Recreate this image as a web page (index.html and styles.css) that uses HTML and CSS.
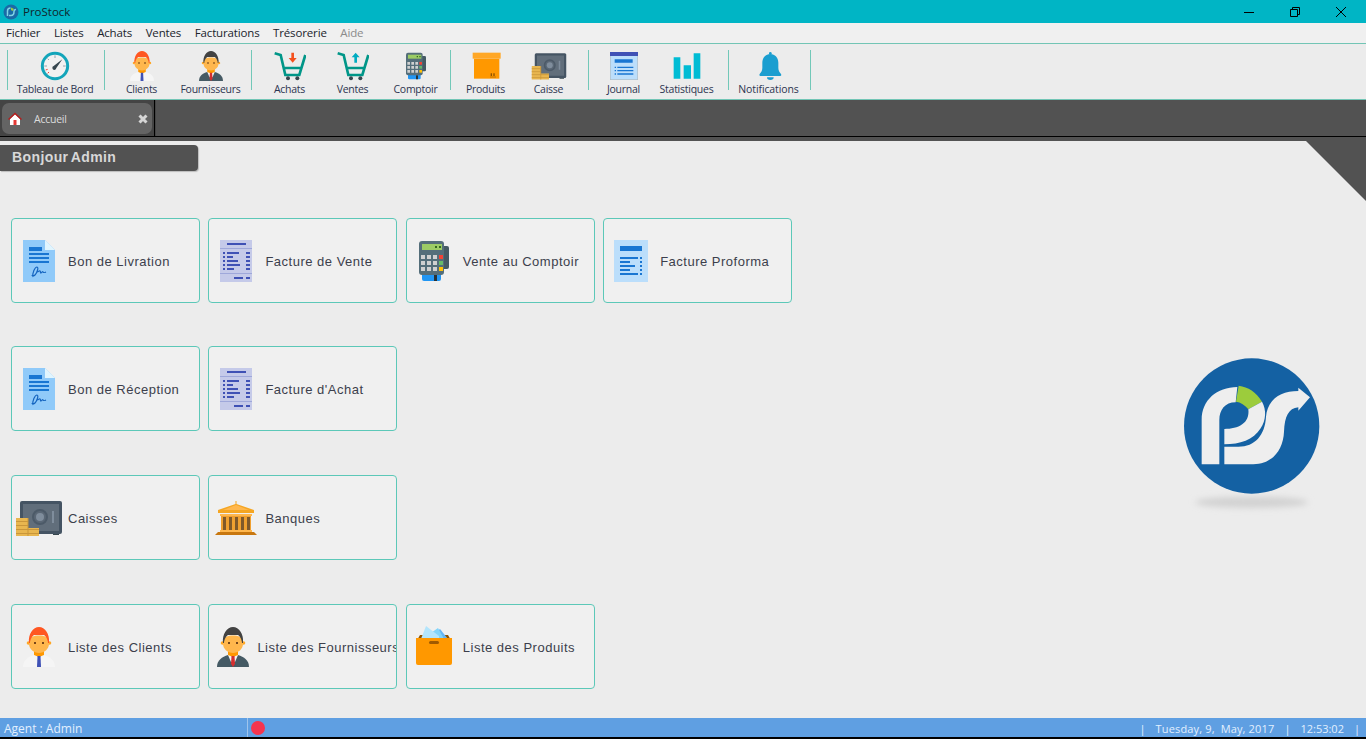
FILE: index.html
```html
<!DOCTYPE html>
<html lang="fr">
<head>
    <meta charset="UTF-8">
    <meta name="viewport" content="width=device-width, initial-scale=1.0">
    <title>ProStock</title>
    <link rel="stylesheet" href="styles.css">
</head>
<body>
    <!-- icon sheet, everything below is drawn on a 48x48 box -->
    <svg class="icon-sheet" xmlns="http://www.w3.org/2000/svg">
        <symbol id="i-doc" viewBox="0 0 48 48">
            <path fill="#90caf9" d="M8 3h22l10 10v32H8z"/>
            <path fill="#e1f5fe" d="M30 3l10 10H30z"/>
            <path fill="#1976d2" d="M14 10h13v4H14zM14 16h20v2H14zM14 20h20v2H14zM14 24h20v2H14z"/>
            <path fill="none" stroke="#1565c0" stroke-width="1.2" d="M18 40c-1-4 2-10 4-10 2 0 0 6-2 8-1 1-3 1-3 0M22 35c2 0 2-2 3-1s0 2 1 2 1-2 2-1 1 1 3 0"/>
        </symbol>
        <symbol id="i-receipt" viewBox="0 0 48 48">
            <path fill="#c5cae9" d="M8 3h32v42H8z"/>
            <path fill="#9fa8da" d="M8 11h32v1H8zM8 36h32v1H8z"/>
            <path fill="#3f51b5" d="M15 6h19v2H15zM11 15h2v2h-2zM15 15h12v2H15zM34 15h4v2h-4zM11 19h2v2h-2zM15 19h6v2h-6zM34 19h4v2h-4zM11 23h2v2h-2zM15 23h11v2H15zM34 23h4v2h-4zM11 27h2v2h-2zM15 27h13v2H15zM34 27h4v2h-4zM11 31h2v2h-2zM15 31h7v2h-7zM34 31h4v2h-4zM22 40h9v2h-9zM34 40h4v2h-4z"/>
        </symbol>
        <symbol id="i-terminal" viewBox="0 0 48 48">
            <path fill="#455a64" d="M32 9h5a2 2 0 0 1 2 2v19a2 2 0 0 1-2 2h-5z"/>
            <path fill="#2196f3" d="M12 36h19v6a2 2 0 0 1-2 2H14a2 2 0 0 1-2-2z"/>
            <path fill="#263238" d="M24 38h3v6h-3z"/>
            <rect fill="#546e7a" x="9" y="4" width="25" height="34" rx="3"/>
            <path fill="#9ccc65" d="M12 7h20v6H12z"/>
            <path fill="#33691e" d="M25 9h2v2h-2zM29 9h2v2h-2z"/>
            <path fill="#cfd0d0" d="M11 18h4v4h-4zM17 18h4v4h-4zM23 18h4v4h-4zM11 24h4v4h-4zM17 24h4v4h-4zM23 24h4v4h-4zM11 30h4v4h-4zM17 30h4v4h-4zM23 30h4v4h-4z"/>
            <path fill="#f44336" d="M29 18h4v4h-4z"/>
            <path fill="#66bb6a" d="M29 24h4v4h-4z"/>
            <path fill="#ffc107" d="M29 30h4v4h-4z"/>
        </symbol>
        <symbol id="i-proforma" viewBox="0 0 48 48">
            <path fill="#bbdefb" d="M7 3h34v42H7z"/>
            <path fill="#1976d2" d="M13 9h22v5H13zM13 20h18v2H13zM33 20h2v2h-2zM13 24h10v2H13zM33 24h2v2h-2zM13 28h15v2H13zM33 28h2v2h-2zM13 32h10v2H13zM33 32h2v2h-2zM13 36h18v2H13zM33 36h2v2h-2z"/>
        </symbol>
        <symbol id="i-safe" viewBox="0 0 48 48">
            <path fill="#37474f" d="M38 39h6v2h-6z"/>
            <rect fill="#455463" x="5" y="7" width="42" height="33" rx="2"/>
            <path fill="#616e7b" d="M8 10h36v27H8z"/>
            <circle fill="#5a6775" stroke="#4c5a68" stroke-width="2" cx="25" cy="23" r="7"/>
            <circle fill="#7f8d9c" cx="25" cy="23" r="4"/>
            <path fill="#7f8d9c" d="M37 17h2v12h-2z"/>
            <path fill="#e8b64f" d="M1 24h12v18H1zM13 34h11v8H13z"/>
            <path stroke="#c9963a" fill="none" d="M1 27.500h12M1 31.500h12M1 35.500h23M1 39.500h23M13 24v18"/>
        </symbol>
        <symbol id="i-bank" viewBox="0 0 48 48">
            <path fill="#f5a623" d="M23.500 7h1v3l17.500 6v3H6v-3l17.500-6z"/>
            <path fill="#ffb74d" d="M24 11l13 5H11zM8 20h32v2H8z"/>
            <path fill="#f0a030" d="M9 22h30v14H9z"/>
            <path fill="#80592a" d="M11 23h3v13h-3zM17 23h3v13h-3zM23 23h3v13h-3zM29 23h3v13h-3zM35 23h3v13h-3z"/>
            <path fill="#ffb74d" d="M8 36h32v2H8z"/>
            <path fill="#c8770f" d="M6 38h36l3 3H3z"/>
        </symbol>
        <symbol id="i-client" viewBox="0 0 48 48">
            <path fill="#f5f5f5" d="M8 44c0-7 5-10 11-12h10c6 2 11 5 11 12z"/>
            <path fill="#ff9800" d="M19 27h10v5l-5 2-5-2z"/>
            <path fill="#3f51b5" d="M22.500 33h3l.5 11h-4z"/>
            <circle fill="#ffa726" cx="13.500" cy="20" r="1.800"/>
            <circle fill="#ffa726" cx="34.500" cy="20" r="1.800"/>
            <path fill="#ffb74d" d="M14 17c0-6 20-6 20 0v4c0 5-5 9-10 9s-10-4-10-9z"/>
            <path fill="#ff5722" d="M14 20c-1-9 4-16 10-16s11 7 10 16l-1 0c0-3-2-7-4-8h-10c-2 1-4 5-4 8z"/>
            <path fill="#784719" d="M19 19h2v2h-2zM27 19h2v2h-2z"/>
        </symbol>
        <symbol id="i-supplier" viewBox="0 0 48 48">
            <path fill="#455a64" d="M8 44c0-7 5-10 11-12h10c6 2 11 5 11 12z"/>
            <path fill="#f5f5f5" d="M19 32h10l-3 7h-4z"/>
            <path fill="#ff9800" d="M19 27h10v5l-5 2-5-2z"/>
            <path fill="#d32f2f" d="M22.500 33h3l.5 8-2 3-2-3z"/>
            <circle fill="#ffa726" cx="13.500" cy="20" r="1.800"/>
            <circle fill="#ffa726" cx="34.500" cy="20" r="1.800"/>
            <path fill="#ffb74d" d="M14 17c0-6 20-6 20 0v4c0 5-5 9-10 9s-10-4-10-9z"/>
            <path fill="#424242" d="M14 20c-1-9 4-16 10-16s11 7 10 16l-1 0c0-3-2-7-4-8h-10c-2 1-4 5-4 8z"/>
            <path fill="#784719" d="M19 19h2v2h-2zM27 19h2v2h-2z"/>
        </symbol>
        <symbol id="i-openbox" viewBox="0 0 48 48">
            <path fill="#8d5200" d="M6 19l4-7h28l4 7z"/>
            <path fill="#64b5f6" d="M24 11l6-5 8 10H24z"/>
            <path fill="#81d4fa" d="M18 12l10-7 6 11H18z"/>
            <path fill="#b3e5fc" d="M11 16l5-13 13 10v3z"/>
            <path fill="#ff9800" d="M6 15h36v25a2 2 0 0 1-2 2H8a2 2 0 0 1-2-2z"/>
            <rect fill="#a05a00" x="19" y="18" width="10" height="3" rx="1.500"/>
        </symbol>
        <symbol id="i-gauge" viewBox="0 0 48 48">
            <circle fill="#f1f1f1" stroke="#13a5ba" stroke-width="4.500" cx="24" cy="24" r="19"/>
            <path fill="#37474f" d="M35 14L26 27a3 3 0 1 1-4-3z"/>
            <path fill="none" stroke="#90a4ae" stroke-width="1.500" d="M24 8v4M13 13l2 2M8 24h4M40 24h-4"/>
            <path fill="none" stroke="#f44336" stroke-width="1.500" d="M10 30l3-1M13 35l2-2"/>
        </symbol>
        <symbol id="i-cart-in" viewBox="0 0 48 48">
            <path fill="none" stroke="#009688" stroke-width="4" d="M1 5l9 2.500 7 30h21l9-30M13 27h29"/>
            <circle fill="#37474f" cx="21" cy="42.500" r="3"/>
            <circle fill="#37474f" cx="35" cy="42.500" r="3"/>
            <path fill="#f4511e" d="M26 4h4v8h4l-6 7-6-7h4z"/>
        </symbol>
        <symbol id="i-cart-out" viewBox="0 0 48 48">
            <path fill="none" stroke="#009688" stroke-width="4" d="M1 5l9 2.500 7 30h21l9-30M13 27h29"/>
            <circle fill="#37474f" cx="21" cy="42.500" r="3"/>
            <circle fill="#37474f" cx="35" cy="42.500" r="3"/>
            <path fill="#00acc1" d="M26 19h4v-8h4l-6-7-6 7h4z"/>
        </symbol>
        <symbol id="i-box" viewBox="0 0 48 48">
            <path fill="#ff9800" d="M6 13h38v30H6z"/>
            <path fill="#ffa726" d="M4 4h42v9H4z"/>
            <path fill="#8d5200" d="M31 35h2v4h-2zM35 35h2v4h-2zM30 40h9v1h-9z"/>
        </symbol>
        <symbol id="i-journal" viewBox="0 0 48 48">
            <path fill="#b0bec5" d="M3 3h42v42H3z"/>
            <path fill="#bbdefb" d="M4 9h40v35H4z"/>
            <path fill="#3f51b5" d="M3 3h42v6H3z"/>
            <path fill="#1976d2" d="M10 14h27v5H10zM10 25h2v2h-2zM14 25h24v2H14zM10 30h2v2h-2zM14 30h24v2H14zM10 35h2v2h-2zM14 35h24v2H14z"/>
        </symbol>
        <symbol id="i-bars" viewBox="0 0 48 48">
            <path fill="#00bcd4" d="M4 11h10v32H4zM19 23h11v20H19zM34 5h10v38H34z"/>
        </symbol>
        <symbol id="i-bell" viewBox="0 0 48 48">
            <circle fill="#1a9ed0" cx="26" cy="5" r="2"/>
            <path fill="#1a9ed0" d="M26 6c-7 0-12 6-12 13v8c0 4-2 7-4 9-1 2 0 3 2 3h28c2 0 3-1 2-3-2-2-4-5-4-9v-8c0-7-5-13-12-13z"/>
            <path fill="#1a9ed0" d="M21 41a5 4 0 0 0 10 0z"/>
        </symbol>
        <symbol id="i-logo" viewBox="0 0 495 525">
            <circle fill="#1461a3" cx="245" cy="243" r="203"/>
            <path fill="#eeeeee" d="M95 358V225C95 165 140 127 202 126L197 172C165 172 148 195 148 225V358Z"/>
            <path fill="#9ccc3c" d="M206 122C235 126 258 140 276 170L235 193C225 180 212 172 198 170Z"/>
            <path fill="#eeeeee" d="M235 193L276 170C290 195 288 225 272 250C250 285 210 298 163 298V252C205 252 240 235 235 193Z"/>
            <path fill="#eeeeee" d="M163 305H205C255 305 285 270 288 215C292 165 330 138 385 138V128L420 157L385 197V187C355 190 344 215 342 260C340 310 310 358 250 358H163Z"/>
        </symbol>
    </svg>

    <div class="window">
        <header class="titlebar">
            <div class="titlebar-name">
                <svg class="app-icon" viewBox="0 0 16 16">
                    <circle fill="#1a6aa6" cx="8" cy="8" r="7.500"/>
                    <path fill="none" stroke="#7fd4e6" stroke-width="1.500" d="M4.500 12V7c0-2 1-3 3-3"/>
                    <path fill="#9ccc3c" d="M8 3.500l3 1.500-1.500 2L8 6z"/>
                    <path fill="none" stroke="#7fd4e6" stroke-width="1.500" d="M6 11.500h2c2 0 3-2 3-4 0-1 1-2 2-2"/>
                </svg>
                <span>ProStock</span>
            </div>
            <div class="win-controls">
                <svg class="win-btn" viewBox="0 0 12 12"><path d="M1 6.500h10"/></svg>
                <svg class="win-btn" viewBox="0 0 12 12"><path d="M1.500 3.500h7v7h-7zM3.500 3.500v-2h7v7h-2"/></svg>
                <svg class="win-btn" viewBox="0 0 12 12"><path d="M1 1l10 10M11 1L1 11"/></svg>
            </div>
        </header>

        <nav class="menubar">
            <span>Fichier</span>
            <span>Listes</span>
            <span>Achats</span>
            <span>Ventes</span>
            <span>Facturations</span>
            <span>Trésorerie</span>
            <span class="disabled">Aide</span>
        </nav>

        <div class="toolbar">
            <div class="tool-group group-dash">
                <div class="tool tool-wide"><svg class="tool-icon"><use href="#i-gauge"/></svg><span>Tableau de Bord</span></div>
            </div>
            <div class="tool-group group-people">
                <div class="tool tool-people"><svg class="tool-icon icon-big"><use href="#i-client"/></svg><span>Clients</span></div>
                <div class="tool tool-people"><svg class="tool-icon icon-big"><use href="#i-supplier"/></svg><span>Fournisseurs</span></div>
            </div>
            <div class="tool-group group-sales">
                <div class="tool"><svg class="tool-icon"><use href="#i-cart-in"/></svg><span>Achats</span></div>
                <div class="tool"><svg class="tool-icon"><use href="#i-cart-out"/></svg><span>Ventes</span></div>
                <div class="tool"><svg class="tool-icon"><use href="#i-terminal"/></svg><span>Comptoir</span></div>
            </div>
            <div class="tool-group group-stock">
                <div class="tool"><svg class="tool-icon"><use href="#i-box"/></svg><span>Produits</span></div>
                <div class="tool"><svg class="tool-icon icon-big"><use href="#i-safe"/></svg><span>Caisse</span></div>
            </div>
            <div class="tool-group group-reports">
                <div class="tool"><svg class="tool-icon"><use href="#i-journal"/></svg><span>Journal</span></div>
                <div class="tool"><svg class="tool-icon"><use href="#i-bars"/></svg><span>Statistiques</span></div>
            </div>
            <div class="tool-group group-last">
                <div class="tool tool-notif"><svg class="tool-icon"><use href="#i-bell"/></svg><span>Notifications</span></div>
            </div>
        </div>

        <div class="tabbar">
            <div class="tab-slot">
                <div class="tab">
                    <svg class="tab-home" viewBox="0 0 14 14">
                        <path fill="#fff" d="M2 7l5-5 5 5v6H2z"/>
                        <path fill="none" stroke="#b71c1c" stroke-width="1.400" d="M.5 7.500L7 1.500l6.500 6"/>
                        <path fill="#e53935" d="M5.500 8h3v5h-3z"/>
                    </svg>
                    <span class="tab-label">Accueil</span>
                    <svg class="tab-close" viewBox="0 0 10 10"><path d="M1.500 1.500l7 7M8.500 1.500l-7 7"/></svg>
                </div>
            </div>
        </div>

        <main class="home">
            <div class="corner"></div>
            <div class="greeting">Bonjour Admin</div>
            <div class="home-body">
                <div class="card-rows">
                    <div class="card-row">
                        <div class="card"><svg class="card-icon"><use href="#i-doc"/></svg><span>Bon de Livration</span></div>
                        <div class="card"><svg class="card-icon"><use href="#i-receipt"/></svg><span>Facture de Vente</span></div>
                        <div class="card"><svg class="card-icon"><use href="#i-terminal"/></svg><span>Vente au Comptoir</span></div>
                        <div class="card"><svg class="card-icon"><use href="#i-proforma"/></svg><span>Facture Proforma</span></div>
                    </div>
                    <div class="card-row">
                        <div class="card"><svg class="card-icon"><use href="#i-doc"/></svg><span>Bon de Réception</span></div>
                        <div class="card"><svg class="card-icon"><use href="#i-receipt"/></svg><span>Facture d'Achat</span></div>
                    </div>
                    <div class="card-row">
                        <div class="card"><svg class="card-icon"><use href="#i-safe"/></svg><span>Caisses</span></div>
                        <div class="card"><svg class="card-icon"><use href="#i-bank"/></svg><span>Banques</span></div>
                    </div>
                    <div class="card-row">
                        <div class="card"><svg class="card-icon"><use href="#i-client"/></svg><span>Liste des Clients</span></div>
                        <div class="card card-narrow"><svg class="card-icon"><use href="#i-supplier"/></svg><span>Liste des Fournisseurs</span></div>
                        <div class="card"><svg class="card-icon"><use href="#i-openbox"/></svg><span>Liste des Produits</span></div>
                    </div>
                </div>
                <svg class="brand" viewBox="0 0 495 525">
                    <defs>
                        <filter id="soft" x="-20%" y="-100%" width="140%" height="300%"><feGaussianBlur stdDeviation="10"/></filter>
                    </defs>
                    <ellipse fill="#d2d2d2" cx="245" cy="472" rx="170" ry="17" filter="url(#soft)"/>
                    <use href="#i-logo" width="495" height="525"/>
                </svg>
            </div>
        </main>

        <footer class="statusbar">
            <div class="status-agent">Agent : Admin</div>
            <div class="status-dot"></div>
            <div class="status-right">
                <span>|</span>
                <span class="status-date">Tuesday, 9,&nbsp; May, 2017</span>
                <span>|</span>
                <span>12:53:02</span>
                <span>|</span>
            </div>
        </footer>
    </div>
</body>
</html>
```

FILE: styles.css
```css
html, body {
    margin: 0;
    padding: 0;
    height: 100%;
    overflow: hidden;
}
body {
    font-family: "Open Sans", "Noto Sans", sans-serif;
    background-color: #000;
}
.icon-sheet {
    display: none;
}
.window {
    display: flex;
    flex-direction: column;
    height: 737px;
}

/* title bar */
.titlebar {
    height: 23px;
    flex: none;
    background-color: #00b5c5;
    display: flex;
    justify-content: space-between;
    align-items: center;
}
.titlebar-name {
    display: flex;
    align-items: center;
    font-size: 11.500px;
    color: #10252c;
    padding-left: 3px;
}
.app-icon {
    width: 16px;
    height: 16px;
    margin-right: 4px;
}
.win-controls {
    display: flex;
    align-items: center;
    padding-right: 19px;
    gap: 34px;
}
.win-btn {
    width: 12px;
    height: 12px;
    fill: none;
    stroke: #000;
    stroke-width: 1;
}

/* menu */
.menubar {
    height: 20px;
    flex: none;
    box-sizing: border-box;
    background-color: #f0f0f0;
    display: flex;
    align-items: center;
    gap: 13.600px;
    padding: 0 0 2px 6px;
    font-size: 11.500px;
    letter-spacing: -.15px;
    color: #20242c;
}
.menubar .disabled {
    color: #8b8b8b;
}

/* toolbar */
.toolbar {
    height: 57px;
    flex: none;
    box-sizing: border-box;
    background-color: #ececec;
    border-top: 1px solid #72c5b5;
    border-bottom: 1px solid #72c5b5;
    display: flex;
    padding: 6px 0 0 7px;
}
.tool-group {
    display: flex;
    height: 40px;
    border-left: 1px solid #72c8b8;
}
.group-dash { width: 96px; }
.group-people { width: 147px; padding-left: 2px; box-sizing: border-box; }
.group-sales { width: 199px; padding-left: 6px; box-sizing: border-box; }
.group-stock { width: 138px; padding-left: 3px; box-sizing: border-box; }
.group-reports { width: 140px; padding-left: 3px; box-sizing: border-box; }
.group-last { width: 81px; border-right: 1px solid #72c8b8; }
.tool {
    width: 63px;
    display: flex;
    flex-direction: column;
    align-items: center;
    font-size: 10.500px;
    letter-spacing: -.25px;
    color: #2c3550;
    white-space: nowrap;
}
.tool-wide { width: 94px; }
.tool-people { width: 69px; }
.tool-notif { width: 79px; letter-spacing: -.1px; }
.tool-icon {
    width: 32px;
    height: 32px;
    flex: none;
}
.icon-big {
    width: 36px;
    height: 36px;
    margin: -2px 0;
}
.tool span {
    line-height: 14px;
}

/* tabs */
.tabbar {
    height: 37px;
    flex: none;
    box-sizing: border-box;
    background-color: #525252;
    border-bottom: 1px solid #000;
}
.tab-slot {
    width: 156px;
    height: 36px;
    box-sizing: border-box;
    background: linear-gradient(to right, #444 154px, #000 154px, #000 155px, #444 155px);
    padding: 3px 0 0 2px;
}
.tab {
    width: 150px;
    height: 31px;
    box-sizing: border-box;
    background-color: #646464;
    border-radius: 7px;
    display: flex;
    align-items: center;
    padding: 0 4px 0 6px;
}
.tab-home {
    width: 14px;
    height: 14px;
    flex: none;
}
.tab-label {
    flex: 1;
    margin-left: 12px;
    font-size: 10.500px;
    letter-spacing: -.25px;
    color: #dcdcdc;
}
.tab-close {
    width: 10px;
    height: 10px;
    fill: none;
    stroke: #d6d6d6;
    stroke-width: 3;
}

/* home page */
.home {
    flex: 1;
    position: relative;
    background-color: #ececec;
    margin-top: 0;
    border-top: 4px solid #525252;
    padding-top: 4px;
}
.corner {
    position: absolute;
    top: 0;
    right: 0;
    width: 60px;
    height: 60px;
    background-color: #525252;
    clip-path: polygon(0 0, 100% 0, 100% 100%);
}
.greeting {
    width: 198px;
    height: 26px;
    box-sizing: border-box;
    background-color: #525252;
    border-radius: 0 4px 4px 0;
    box-shadow: 1px 1px 1px #bcbcbc;
    padding-left: 12px;
    font-family: "Liberation Sans", sans-serif;
    font-size: 14px;
    font-weight: bold;
    line-height: 24px;
    letter-spacing: .4px;
    word-spacing: -1.500px;
    color: #d8d8d8;
}
.home-body {
    display: flex;
    justify-content: space-between;
    margin-top: 46.800px;
    padding: 0 31px 0 11px;
}
.card-rows {
    display: flex;
    flex-direction: column;
    gap: 43.600px;
}
.card-row {
    display: flex;
    gap: 8.400px;
}
.card {
    width: 189px;
    height: 85px;
    box-sizing: border-box;
    background-color: #f0f0f0;
    border: 1px solid #5cc8b8;
    border-radius: 4px;
    display: flex;
    align-items: center;
    overflow: hidden;
    padding-left: 3px;
    font-family: "Liberation Sans", sans-serif;
    font-size: 13px;
    letter-spacing: .5px;
    color: #3c3f4c;
    white-space: nowrap;
}
.card span {
    padding-top: 2px;
}
.card-icon {
    width: 48px;
    height: 48px;
    flex: none;
    margin: 1px 5px 0 0;
}
.card-narrow {
    padding-left: 0;
}
.card-narrow .card-icon {
    margin-right: 0;
}
.brand {
    width: 165px;
    height: 175px;
    flex: none;
    margin-top: 127px;
}

/* status bar */
.statusbar {
    height: 19px;
    flex: none;
    background-color: #5f9fe2;
    display: flex;
    align-items: center;
    font-size: 12px;
    color: #e2f0ff;
}
.status-agent {
    width: 243px;
    height: 17px;
    line-height: 17px;
    padding: 2px 0 0 4px;
    border-right: 1px solid #9fc4ec;
}
.status-dot {
    width: 14px;
    height: 14px;
    margin-left: 3px;
    border-radius: 50%;
    background-color: #f5344e;
}
.status-right {
    margin-left: auto;
    display: flex;
    gap: 10px;
    padding: 1px 6px 0 0;
    font-size: 11px;
}
.status-date {
    letter-spacing: .15px;
}
```
